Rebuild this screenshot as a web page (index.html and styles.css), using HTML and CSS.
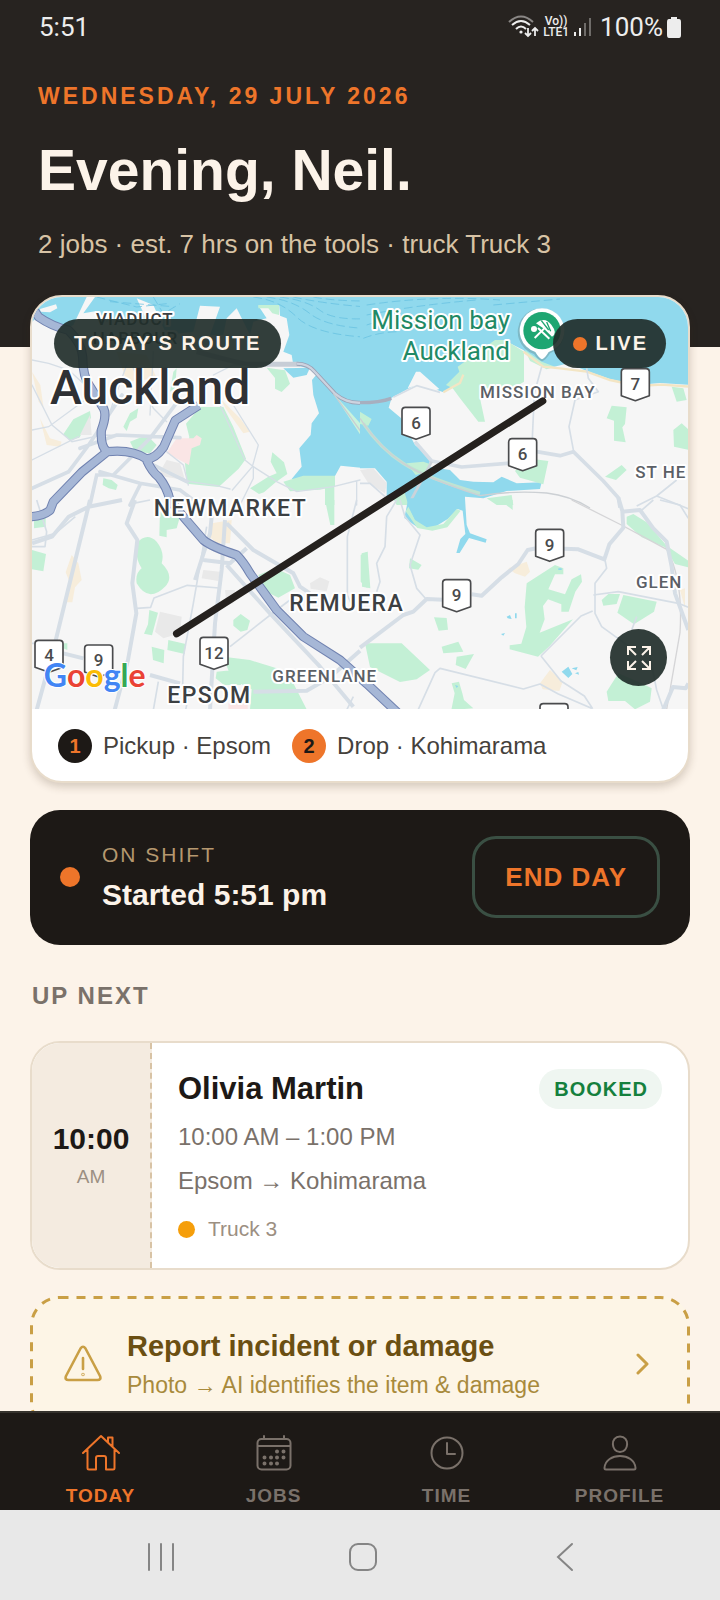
FILE: index.html
```html
<!DOCTYPE html>
<html lang="en">
<head>
    <meta charset="UTF-8">
    <meta name="viewport" content="width=device-width, initial-scale=1.0">
    <title>Today</title>
    <link rel="stylesheet" href="styles.css">
</head>
<body>
<div class="app">

    <div class="status-bar">
        <span class="clock">5:51</span>
        <div class="status-icons">
            <svg width="31" height="24" viewBox="0 0 31 24" fill="none" stroke="#ededed" stroke-width="2">
                <path d="M1 7Q13 -4 25 7" stroke="#8a8785"/>
                <path d="M4 10Q13 2 22 10M8 14Q13 9 18 14"/>
                <circle cx="13" cy="17" r="1.6" fill="#ededed" stroke="none"/>
                <path d="M20 13v8M17 18l3 3 3-3M27 21v-8M24 16l3-3 3 3" stroke-width="1.8"/>
            </svg>
            <span class="volte"><span>Vo))</span><span>LTE1</span></span>
            <svg width="19" height="20" viewBox="0 0 19 20">
                <path d="M1 15h2v4H1zM6 11h2v8H6z" fill="#ededed"/>
                <path d="M11 6h2v13h-2zM16 1h2v18h-2z" fill="#6f6c69"/>
            </svg>
            <span class="charge">100%</span>
            <svg width="14" height="21" viewBox="0 0 14 21" fill="#ededed">
                <path d="M4 0h6v2h2q2 0 2 3v13q0 3-2 3H2q-2 0-2-3V5q0-3 2-3h2z"/>
            </svg>
        </div>
    </div>

    <div class="scroll">
        <header class="hero">
            <p class="date">WEDNESDAY, 29 JULY 2026</p>
            <h1>Evening, Neil.</h1>
            <p class="summary">2 jobs · est. 7 hrs on the tools · truck Truck 3</p>
        </header>

        <main>
            <section class="route-card">
                <div class="map">
                    <svg class="map-art" viewBox="0 0 1968 1236" preserveAspectRatio="xMidYMid slice">
                        <defs>
                            <path id="shield" d="M-42 -38q0 -10 10 -10h64q10 0 10 10v71L0 48L-42 33z" fill="#fff" stroke="#4a4b4d" stroke-width="5" stroke-linejoin="round"/>
                            <path id="motorway" d="M0 30L20 60Q60 88 110 100 150 140 152 180 152 240 175 270L215 335Q225 355 208 400 205 450 226 464L150 525 64 614 54 640Q30 659 -10 659M226 464Q300 456 344 486 370 485 395 450L430 370 500 325M344 490Q360 525 380 540 405 570 414 610L454 659 514 729Q540 750 614 774 635 795 654 829L734 939 814 1019 924 1089 1004 1160 1100 1250"/>
                        </defs>
                        <rect width="1968" height="1236" fill="#f6f6f6"/>

                        <!-- north west -->
                        <g transform="translate(-36 -36)">
                            <path fill="#90d9ed" d="M36 30H1022V548L962 542 940 582 815 582 845 545 838 490 872 450 875 415 897 385 880 330 876 285 895 262 860 248 820 240 815 210 790 200 808 150 800 100 780 92 778 62 715 62 740 100 700 110 690 150 650 70 620 100 610 150 570 150 600 65 540 62 520 140 440 150 400 60 350 40 380 105 260 110 230 78 190 85 225 36 200 36 160 120 120 140 80 125 60 90 36 110z"/>
                            <path fill="#90d9ed" d="M790 250l30 28 40-8 10-22z"/>
                            <path fill="#f6f6f6" d="M60 72l48-14 4 12-22 12-28-2z"/>
                            <g fill="#c3f0d5">
                                <path d="M715 60h62v30l-20-5-12-15-30 0zM740 248l55 8 15 40-25 25-20-10 0-32zM540 366h70l30 60 38 95-22 30-60 55-95-10-8-80 15-60-10-40zM130 448l30-45 50-25 3 20-35 60-30 8zM310 425l20-40 25-15-5 28-20 12-10 28zM330 470l50-20 30 30-20 25-45-5zM250 580l25 5 18 15-5 15-22-5-18-10zM690 610l55-35 25-10-18-35 5-28 35 30 10 35-35 25-35 30-15 5zM790 590l60-18h95v32l-45 10-90 5zM915 600h28v60h-28zM460 260l10-10-5 60-15 10z"/>
                            </g>
                            <path fill="#fae5e5" d="M440 505l30-45 50 0 10-10 15 10-5 20-25 10-8 50z"/>
                            <path fill="#e9e9e9" d="M180 450l30-60 5 60zM420 560l20-35 40 10 15 50-60-10z"/>
                            <path fill="#f7eddb" d="M36 260l20 90 15 20-10-70zM60 400l30 60 35 10-5 15-40-5zM600 340l60 60 30 40-20 5-50-70zM290 200l90 10 30 70-90 10z"/>
                            <g fill="none" stroke="#d6dee6" stroke-linecap="round" stroke-width="4">
                                <path d="M36 225l50 10 60 20 55 50M36 300l60 120 60 50 90-20 190 5 70-80M36 435l50-10 150-110M36 525l140-70M320 240l-40 110-10 30M400 200l-10 190M340 250l60 120 40 40M600 360l75 165 25 20M640 360l75 120-18 65-60 70M660 660l40-80 0-35M420 550l90 40 80 12 40 10M440 500l50 40 15 60M700 545l70 45 60 30 110-15 80-20M1010 590v70M580 270l60-30h60"/>
                            </g>
                            <g fill="none" stroke="#d6dee6" stroke-linecap="round" stroke-width="11">
                                <path d="M180 490l110-40 190 8M480 340l-90 120-110 110-50 0-20 90M36 610l110-50 60-80 100-150M240 560l120 35 120 20 60 45M360 600l-30 60M500 590l-120-60"/>
                            </g>
                            <path d="M530 200q90 25 150 38h160" fill="none" stroke="#c7cdd6" stroke-width="15"/>
                            <path d="M830 236q35 0 55 25l60 65q35 30 80 27" fill="none" stroke="#9aa2b6" stroke-width="12"/>
                            <path d="M830 236q35 0 55 25l60 65q35 30 80 27" fill="none" stroke="#cdd3df" stroke-width="7"/>
                            <path d="M940 325l85 95-5 28z" fill="#c9f3dc"/>
                            <path d="M940 325l85 118" fill="none" stroke="#c9cdd2" stroke-width="4"/>
                            <g fill="none" stroke="#64bfe0" stroke-width="3" stroke-dasharray="26 12" opacity=".7">
                                <path d="M700 36q80 10 130 60t200 60M740 36q80 10 130 50t180 45M780 36q80 10 120 40t140 25M820 36q90 20 220 30M880 36q60 12 160 12M230 36l120 30 90-10M400 36l30 50 50-30M270 50l190 15"/>
                            </g>
                        </g>

                        <!-- north east -->
                        <g transform="translate(984 -36)">
                            <path fill="#90d9ed" d="M0 30H990V300L900 294 830 300 750 282 680 258 625 235 580 246 540 234 490 195 430 165 405 165 405 180 375 205 300 245 314 268 300 292 250 322 205 305 165 300 95 338 86 368 122 398 165 480 212 520 205 545 270 555 300 585 340 590 400 592 425 575 470 595 545 592 540 612 440 618 370 640 315 635V665H150L120 650 80 640V590L45 550H0z"/>
                            <path fill="#f6f6f6" d="M143 310l25-50 12 0 58 52-18 6-60-14z"/>
                            <g fill="#c3f0d5">
                                <path d="M405 165l30 0 57 35 0 90-50 30-60-10-22 30 15 70-20 0-55-70-22-30-20-10 40-40-5-15zM495 195l50 35 40 15-25 8-50-25zM740 400l15-38 45 5-5 50-8 10 10 45-35-5 0-60zM735 575l50-35 15 15-32 30zM935 305l35 5 10 35-30 5zM940 435l25-20 22 20v60l-45-10zM500 520l65 8-15 70-70-20-15-20zM140 535l50-5 22 8-5 20-40 12zM0 380l35 22-10 20-25-5zM380 640l75-10 5 30h-50zM100 640l30-30 15 50h-35z"/>
                            </g>
                            <path fill="none" stroke="#f3e5c4" stroke-width="7" d="M250 322l50-28 10-25M490 200l60 45 50 5 80 10 70 25 85 18 70-4 85 6"/>
                            <path fill="#e9e9e9" d="M0 555l40-5 40 45-5 30-50-30z"/>
                            <g fill="none" stroke="#d6dee6" stroke-width="5" stroke-linejoin="round">
                                <path d="M545 245l-22 80-8 180M680 250l5 30 30 40-70 25-18 80 15 80M0 595l30 0 45 40M950 585l-60 48-60 30M890 633l100 40M240 322l-70-20-70 35"/>
                            </g>
                            <g fill="none" stroke="#d6dee6" stroke-width="11" stroke-linejoin="round">
                                <path d="M165 470l50 58 90 18 150-12M530 500l70 12 40-12 90 88 45 50 5 30"/>
                            </g>
                            <path d="M0 353q60 0 94-13" fill="none" stroke="#a7afbf" stroke-width="10"/>
                            <path d="M10 415q50 75 120 120t230 90" fill="none" stroke="#bfe3d3" stroke-width="10"/>
                            <path d="M0 400q60 90 130 135t230 97q100-16 200-8 70 8 130 45" fill="none" stroke="#ccd0d4" stroke-width="4"/>
                            <path d="M215 530l-70 130" fill="none" stroke="#ccd3da" stroke-width="8"/>
                            <g fill="none" stroke="#64bfe0" stroke-width="3" stroke-dasharray="26 12" opacity=".7">
                                <path d="M20 60q200-30 400-15M20 90q150-30 330-45M20 120q60-20 140-25M10 160q50-20 110-20M400 60l200-18"/>
                            </g>
                        </g>

                        <!-- south west -->
                        <g transform="translate(-36 609)">
                            <g fill="#c3f0d5">
                                <path d="M350 130q30-35 60-5 25 30 15 65 40 40 10 70-50 50-85-10-5-30 15-45-20-30-15-75zM36 150l42 12-8 52-34-6zM42 60l35-10v30l-35 5zM420 30l60 20-10 35-30 5 0 22-22-5zM915 0h28v75h-12zM715 225l50-20 45 20 15 40-50 28-40-20zM640 360l22-18 28 20-8 28-20 5-22-18zM388 330l26 8-18 68-24-5 12-28zM395 440l38 10-2 40-32-10zM445 420l52 12-3 30-52-12zM610 470l80 10 80 25 50 45 40 78H690l5-60-60-30zM590 515l50-5 32 25-10 20-50 0-25-20zM1022 165l20-10v110l-20-20zM130 430l12 0v20l-12-5z"/>
                            </g>
                            <path fill="#e9e9e9" d="M420 335l65 15-5 50-50 15-25-20zM550 210l50 5-5 28-50-8zM870 250l30-18 28 12-8 30-48-8zM615 270l30 0-5 40-20 5z"/>
                            <path fill="#f7eddb" d="M155 165l20 25 10 50-20 22-8 45-18 0 10-60-12-30zM575 70l60-10-5 70-40 0-20-20z"/>
                            <path fill="#fae5e5" d="M625 610h58v20h-58z"/>
                            <g fill="none" stroke="#d6dee6" stroke-width="5" stroke-linejoin="round">
                                <path d="M350 325l42-3 10-28 100-38 95 8M560 80l-40 230-30 160-2 90 20 15-12 60M50 0l30 95-5 45-39 0M630 440l140-110 40-30M1010 0l-28 110v175l20 45M415 545l-15 85M36 120l70-20 60-50M340 10l50-10M980 630l20-40M36 430l60 0"/>
                            </g>
                            <g fill="none" stroke="#d6dee6" stroke-width="12" stroke-linejoin="round">
                                <path d="M210 0l-105 430-55 200M36 130l60-20 50-60 60-30 100-20M345 0l-25 70 32 50-15 130 12 90-25 140-40 150M580 0l-10 100-45 140M615 60l-10 150-20 160-15 260M620 70l80 80 120 70 20 40 30 20M550 180l80 10 50-45M620 195l130 145 150 160 100 120M130 460l60 15M390 525l90 25M700 575l160-3 70-40 90-80"/>
                            </g>
                        </g>

                        <!-- south east -->
                        <g transform="translate(984 609)">
                            <path fill="#90d9ed" d="M145 -5h170l5 80 10 25 50 18-3 10-50-14-28 45h-10l12-42 15-15-8-70-15-5-30 30-40 25-25 5-30-8-35-25z"/>
                            <g fill="#c3f0d5">
                                <path d="M5 160l18-5 8 110-25-5zM150 175l35 20-10 14-28-4zM500 250l85-55 25 10 0 18-25 0-20 45 50 15 20-45 28-15 3 22-20 30-20 60-22 0 0-22-40-15-15 20 5 40-15 40 100-40-70 80-35 32-85-22v-12l35-5 15-50-5-60zM222 352l38 2 4 35-28 3zM245 440l50-15 15 30-60 5zM290 470l52-8-25 45-30-12zM15 430h110l85 80-40 28-50 8-90-45zM275 550l22-5 10 35 5 20 28 25-66 5 10-50zM725 300l20-18 35 0-10 30-40 5zM790 285l100 20-8 30-60 38-50-35zM740 575l35-55 70 30 30 15-5 40-45 23-30-25-50 0zM800 50l20-8 40 25 60 70 65 45v20l-40-10-30-50-70-30-45-40zM420 0h38v30z"/>
                                <path d="M145 20l20 40 35 22 50-10 40-45 12 5-40 50-45 10-45-8-35-50z"/>
                            </g>
                            <path fill="#f7eddb" d="M445 205l55-20 10 30-15 15-30-10zM540 550l30-40 38 35-10 28-50-5zM960 270l15-5v60z"/>
                            <path fill="#90d9ed" d="M605 515l20-15 12 22-12 12zM635 505l18-4-4 10zM645 520l10-4 2 8zM440 350l10-5 5 12-12-2zM465 340h5v15h-5zM423 402l12-3-5 8zM595 205h10v5h-10zM285 555l10 3-5 6z"/>
                            <path d="M635 0l155 78 130 70q50 90 40 250l-40 230" fill="none" stroke="#d5d5d7" stroke-width="4"/>
                            <g fill="none" stroke="#d6dee6" stroke-width="5" stroke-linejoin="round">
                                <path d="M110 0l-30 50-5 90-25 50 10 55-10 30M120 0l15 50 45 55-30 90 20 70 28 32M175 628l50-110 15-13 250 62 50-15 55 30 100 43M543 468l60 75 70 45 25 38M543 468l120-120 35-15M735 180l5 25-35 45v90l20 40 90 65M700 285l75-10 180 35 30 12M830 350l-15 40M880 0l-40 35M900 0l60 15 25 40M870 470l20 100 20 58"/>
                            </g>
                            <g fill="none" stroke="#d6dee6" stroke-width="12" stroke-linejoin="round">
                                <path d="M0 443l130-98 30-10 40-38 50 2M335 283l30 4 60-55 50-40 28-42 30-6M610 146l45 2 78 30 15-45 42-50-3-50-12-40M785 35l55-5 40 55 40 40 15 75 10 80 40 110M985 550l-8 15-38-4-30 70"/>
                            </g>
                        </g>

                        <g fill="none" stroke-linejoin="round">
                            <use href="#motorway" stroke="#7082b0" stroke-width="28"/>
                            <use href="#motorway" stroke="#a6b7d6" stroke-width="22"/>
                        </g>

                        <g class="shields">
                            <use href="#shield" x="1152" y="379"/><text x="1152" y="396">6</text>
                            <use href="#shield" x="1472" y="473"/><text x="1472" y="490">6</text>
                            <use href="#shield" x="1810" y="263"/><text x="1810" y="280">7</text>
                            <use href="#shield" x="1553" y="745"/><text x="1553" y="762">9</text>
                            <use href="#shield" x="1274" y="896"/><text x="1274" y="913">9</text>
                            <use href="#shield" x="546" y="1069"/><text x="546" y="1086">12</text>
                            <use href="#shield" x="51" y="1078"/><text x="51" y="1092">4</text>
                            <use href="#shield" x="200" y="1092"/><text x="200" y="1107">9</text>
                            <use href="#shield" x="1566" y="1268"/>
                        </g>

                        <g class="places">
                            <text class="small dark" x="192" y="84">VIADUCT</text>
                            <text class="small dark" x="182" y="142">HARBOUR</text>
                            <text class="city" x="54" y="321">Auckland</text>
                            <text class="suburb" x="365" y="656">NEWMARKET</text>
                            <text class="suburb" x="772" y="942">REMUERA</text>
                            <text class="suburb" x="406" y="1217">EPSOM</text>
                            <text class="small" x="721" y="1154">GREENLANE</text>
                            <text class="small" x="1344" y="302">MISSION BAY</text>
                            <text class="small" x="1810" y="544">ST HE</text>
                            <text class="small" x="1812" y="874">GLEN</text>
                            <text class="beach" x="1434" y="97">Mission bay</text>
                            <text class="beach" x="1434" y="189">Auckland</text>
                        </g>

                        <!-- beach pin -->
                        <g transform="translate(1530 101)">
                            <path d="M0 92q-12-4-24-22A70 70 0 1 1 24 68Q12 88 0 92z" fill="#6c9aa0" opacity=".5"/>
                            <path d="M0 86q-8-2-20-22A67 67 0 1 1 20 64Q8 84 0 86z" fill="#fff"/>
                            <circle r="56" fill="#1ea672"/>
                            <circle cx="-24" cy="-5" r="9" fill="#fff"/>
                            <path d="M-18 -22Q8 -44 28 -18T30 18L6 -6z" fill="#fff"/>
                            <path d="M-22 22L10 -10M-12 -8L22 24" stroke="#fff" stroke-width="6"/>
                            <path d="M-2 -30L20 -2M14 -26L26 2" stroke="#1ea672" stroke-width="4"/>
                        </g>

                        <path d="M434 1010L1532 312" stroke="#25211e" stroke-width="22" stroke-linecap="round"/>

                        <text class="google" x="35" y="1169"><tspan fill="#4285f4">G</tspan><tspan fill="#ea4335">o</tspan><tspan fill="#fbbc05">o</tspan><tspan fill="#4285f4">g</tspan><tspan fill="#34a853">l</tspan><tspan fill="#ea4335">e</tspan></text>
                    </svg>
                    <div class="map-top">
                        <span class="pill">TODAY'S ROUTE</span>
                        <span class="pill live"><i class="dot"></i>LIVE</span>
                    </div>
                    <button class="expand" type="button" aria-label="Expand map">
                        <svg width="24" height="24" viewBox="0 0 24 24" fill="none" stroke="#fcf3e9" stroke-width="2">
                            <path d="M1 9V1h8M1 1l8 8M15 1h8v8M23 1l-8 8M1 15v8h8M1 23l8-8M23 15v8h-8M23 23l-8-8"/>
                        </svg>
                    </button>
                </div>
                <div class="legend">
                    <span class="stop">1</span><span>Pickup · Epsom</span>
                    <span class="stop drop">2</span><span>Drop · Kohimarama</span>
                </div>
            </section>

            <section class="shift">
                <i class="dot"></i>
                <div class="shift-text">
                    <p class="shift-label">ON SHIFT</p>
                    <p class="shift-start">Started 5:51 pm</p>
                </div>
                <button class="end-day" type="button">END DAY</button>
            </section>

            <h2>UP NEXT</h2>

            <article class="job">
                <div class="job-time">
                    <strong>10:00</strong>
                    <span>AM</span>
                </div>
                <div class="job-body">
                    <div class="job-head">
                        <h3>Olivia Martin</h3>
                        <span class="badge">BOOKED</span>
                    </div>
                    <p>10:00 AM – 1:00 PM</p>
                    <p>Epsom → Kohimarama</p>
                    <div class="truck"><i class="dot"></i>Truck 3</div>
                </div>
            </article>

            <a class="report" href="#report">
                <svg class="dashes"><rect x="1.5" y="1.5" rx="28"/></svg>
                <svg width="38" height="38" viewBox="0 0 38 38" fill="none" stroke="#c99f45" stroke-width="2.6" stroke-linecap="round" stroke-linejoin="round">
                    <path d="M16.500 3.500q2.500-3.500 5 0L36 31q1.500 4-2.500 4H4.500Q.5 35 2 31zM19 13v11"/>
                    <circle cx="19" cy="29.500" r=".4"/>
                </svg>
                <div class="report-text">
                    <strong>Report incident or damage</strong>
                    <span>Photo → AI identifies the item &amp; damage</span>
                </div>
                <svg width="14" height="24" viewBox="0 0 14 24" fill="none" stroke="#c99f45" stroke-width="3" stroke-linecap="round" stroke-linejoin="round">
                    <path d="M2 3l9 9-9 9"/>
                </svg>
            </a>
        </main>
    </div>

    <nav class="tabs">
        <a class="active" href="#today">
            <svg viewBox="0 0 38 38">
                <path d="M1 19L19 2l18 17M5.500 16v18q0 1.500 1.500 1.500h7V24q0-2 2-2h6q2 0 2 2v11.500h7q1.500 0 1.500-1.500V16M26 8V3.500h4.500v9"/>
            </svg>
            TODAY
        </a>
        <a href="#jobs">
            <svg viewBox="0 0 38 38">
                <rect x="2.500" y="5" width="33" height="30.500" rx="4"/>
                <path d="M3 12h32M9 2v3M29 2v3"/>
                <path class="days" d="M22 17.500h.01M28.500 17.500h.01M9.500 23.500h.01M16 23.500h.01M22 23.500h.01M28.500 23.500h.01M9.500 29.500h.01M16 29.500h.01M22 29.500h.01"/>
            </svg>
            JOBS
        </a>
        <a href="#time">
            <svg viewBox="0 0 38 38">
                <circle cx="19" cy="19" r="15.500"/>
                <path d="M19 9v11h8"/>
            </svg>
            TIME
        </a>
        <a href="#profile">
            <svg viewBox="0 0 38 38">
                <path d="M19 2.500c10 0 9 15.500 0 15.500S9 2.500 19 2.500zM3.500 34c1-16 30-16 31 0q0 1.500-1.500 1.500H5q-1.500 0-1.500-1.500z"/>
            </svg>
            PROFILE
        </a>
    </nav>

    <div class="system-bar">
        <button type="button" aria-label="Recent apps">
            <svg width="30" height="30" viewBox="0 0 30 30"><path d="M3 2v26M15 2v26M27 2v26"/></svg>
        </button>
        <button type="button" aria-label="Home">
            <svg width="30" height="30" viewBox="0 0 30 30"><rect x="2" y="2" width="26" height="26" rx="8"/></svg>
        </button>
        <button type="button" aria-label="Back">
            <svg width="30" height="30" viewBox="0 0 30 30"><path d="M22 2L8 15l14 13"/></svg>
        </button>
    </div>

</div>
</body>
</html>
```

FILE: styles.css
```css
* {
    box-sizing: border-box;
}

body {
    margin: 0;
    background: #fcf3e9;
    color: #1d1916;
    font-family: "Liberation Sans", Arial, sans-serif;
}

h1, h2, h3, p {
    margin: 0;
}

button {
    font-family: inherit;
    cursor: pointer;
}

a {
    text-decoration: none;
}

.app {
    display: flex;
    flex-direction: column;
    height: 100vh;
}

.dot {
    flex: none;
    display: block;
    width: 20px;
    height: 20px;
    border-radius: 50%;
    background: #ee752a;
}

/* status bar */
.status-bar {
    flex: none;
    display: flex;
    align-items: center;
    justify-content: space-between;
    height: 54px;
    padding: 0 39px;
    background: #272320;
    color: #ededed;
    font-family: Roboto, sans-serif;
    font-size: 26px;
}

.status-icons {
    display: flex;
    align-items: center;
    gap: 4px;
}

.volte {
    display: flex;
    flex-direction: column;
    align-items: center;
    font-size: 12px;
    line-height: 11px;
    font-weight: 500;
}

.charge {
    margin-left: 4px;
}

/* page */
.scroll {
    flex: 1;
    min-height: 0;
    overflow-y: auto;
    scrollbar-width: none;
}

.hero {
    padding: 28px 38px 87px;
    background: #272320;
}

.date {
    color: #ee752a;
    font-size: 23px;
    line-height: 28px;
    font-weight: 700;
    letter-spacing: 3px;
}

h1 {
    margin: 28px 0 26px;
    color: #fcf3e9;
    font-size: 57px;
    line-height: 64px;
}

.summary {
    color: #d8c3a5;
    font-size: 26px;
    line-height: 32px;
}

main {
    padding: 0 30px 26px;
}

/* route card */
.route-card {
    position: relative;
    margin-top: -52px;
    border: 2px solid #e8dccb;
    border-radius: 32px;
    background: #fff;
    box-shadow: 0 4px 8px rgba(60, 40, 20, .2);
    overflow: hidden;
}

.map {
    position: relative;
    height: 412px;
}

.map-art {
    display: block;
    width: 100%;
    height: 100%;
    font-family: Roboto, sans-serif;
    font-weight: 500;
}

.shields text {
    font-size: 51px;
    text-anchor: middle;
    fill: #4a4b4d;
}

.places text {
    paint-order: stroke;
    stroke: #fff;
    stroke-width: 12px;
    stroke-linejoin: round;
    fill: #3c4043;
}

.places .city {
    font-size: 144px;
    fill: #2f3135;
}

.places .suburb {
    font-size: 69px;
    letter-spacing: 4px;
}

.places .small {
    font-size: 51px;
    letter-spacing: 3px;
    fill: #5b6066;
}

.places .dark {
    fill: #3c4043;
}

.places .beach {
    font-size: 78px;
    font-weight: 400;
    text-anchor: end;
    fill: #1f8a66;
}

.google {
    font-family: Lato, sans-serif;
    font-size: 96px;
    font-weight: 700;
    paint-order: stroke;
    stroke: #fff;
    stroke-width: 6px;
}

.map-top {
    position: absolute;
    inset: 22px 22px auto;
    display: flex;
    justify-content: space-between;
}

.pill {
    display: flex;
    align-items: center;
    gap: 9px;
    height: 49px;
    padding: 0 20px;
    border-radius: 25px;
    background: rgba(33, 46, 42, .92);
    color: #fcf3e9;
    font-size: 20px;
    font-weight: 700;
    letter-spacing: 2px;
}

.live {
    padding: 0 18px 0 20px;
}

.pill .dot {
    width: 14px;
    height: 14px;
}

.expand {
    position: absolute;
    right: 21px;
    bottom: 23px;
    display: flex;
    align-items: center;
    justify-content: center;
    width: 57px;
    height: 57px;
    padding: 0;
    border: none;
    border-radius: 50%;
    background: rgba(33, 46, 42, .92);
}

.legend {
    display: flex;
    align-items: center;
    gap: 11px;
    padding: 20px 26px 18px;
    color: #45413c;
    font-size: 24px;
}

.stop {
    width: 34px;
    height: 34px;
    border-radius: 50%;
    background: #1d1916;
    color: #ee752a;
    font-size: 20px;
    line-height: 34px;
    font-weight: 700;
    text-align: center;
}

.drop {
    margin-left: 10px;
    background: #ee752a;
    color: #1d1916;
}

/* shift */
.shift {
    display: flex;
    align-items: center;
    gap: 22px;
    margin-top: 27px;
    padding: 26px 30px 27px;
    border-radius: 30px;
    background: #1d1916;
}

.shift-text {
    flex: 1;
}

.shift-label {
    color: #b5986f;
    font-size: 21px;
    line-height: 28px;
    letter-spacing: 2px;
}

.shift-start {
    margin-top: 8px;
    color: #fcf3e9;
    font-size: 30px;
    line-height: 36px;
    font-weight: 700;
}

.end-day {
    height: 82px;
    padding: 0 30px;
    border: 3px solid #3a4f43;
    border-radius: 24px;
    background: none;
    color: #ee752a;
    font-size: 26px;
    font-weight: 700;
    letter-spacing: 1px;
}

h2 {
    margin: 37px 2px 31px;
    color: #7a716a;
    font-size: 24px;
    line-height: 28px;
    letter-spacing: 2px;
}

/* job card */
.job {
    display: flex;
    border: 2px solid #e8dccb;
    border-radius: 30px;
    background: #fff;
    overflow: hidden;
}

.job-time {
    flex: none;
    display: flex;
    flex-direction: column;
    align-items: center;
    justify-content: center;
    gap: 10px;
    width: 120px;
    border-right: 2px dashed #d8c3a5;
    background: #f4ebe0;
}

.job-time strong {
    font-size: 30px;
    line-height: 32px;
}

.job-time span {
    color: #9c8f82;
    font-size: 19px;
    line-height: 24px;
}

.job-body {
    flex: 1;
    padding: 26px 26px 25px;
    color: #7a716a;
    font-size: 24px;
    line-height: 32px;
}

.job-head {
    display: flex;
    align-items: center;
    justify-content: space-between;
}

.job-body p {
    margin-top: 12px;
}

h3 {
    color: #1d1916;
    font-size: 31px;
    line-height: 40px;
}

.badge {
    padding: 0 14px 0 15px;
    border-radius: 20px;
    background: #eff6f1;
    color: #15803d;
    font-size: 20px;
    line-height: 40px;
    font-weight: 700;
    letter-spacing: 1px;
}

.truck {
    display: flex;
    align-items: center;
    gap: 13px;
    margin-top: 18px;
    color: #9c8f82;
    font-size: 21px;
    line-height: 28px;
}

.truck .dot {
    width: 17px;
    height: 17px;
    background: #f59e0b;
}

/* report incident */
.report {
    position: relative;
    display: flex;
    align-items: center;
    gap: 25px;
    margin-top: 26px;
    padding: 32px 40px 32px 34px;
    border-radius: 30px;
    background: #fdf5e6;
}

.dashes {
    position: absolute;
    inset: 0;
    width: 100%;
    height: 100%;
}

.dashes rect {
    width: calc(100% - 3px);
    height: calc(100% - 3px);
    fill: none;
    stroke: #c99f45;
    stroke-width: 3px;
    stroke-dasharray: 9 8;
}

.report-text {
    flex: 1;
    display: flex;
    flex-direction: column;
    gap: 6px;
}

.report-text strong {
    color: #6b4f12;
    font-size: 29px;
    line-height: 36px;
}

.report-text span {
    color: #a88a3c;
    font-size: 23px;
    line-height: 30px;
}

/* bottom tabs */
.tabs {
    flex: none;
    display: grid;
    grid-template-columns: repeat(4, 1fr);
    padding: 21px 14px 2px;
    border-top: 2px solid #35322d;
    background: #1d1916;
}

.tabs a {
    display: flex;
    flex-direction: column;
    align-items: center;
    gap: 12px;
    color: #7a716a;
    font-size: 19px;
    line-height: 24px;
    font-weight: 700;
    letter-spacing: 1px;
}

.tabs .active {
    color: #ee752a;
}

.tabs svg {
    width: 38px;
    height: 38px;
    fill: none;
    stroke: currentColor;
    stroke-width: 2;
    stroke-linecap: round;
    stroke-linejoin: round;
}

.tabs .days {
    stroke-width: 4;
}

.system-bar {
    flex: none;
    display: flex;
    align-items: center;
    justify-content: center;
    gap: 112px;
    height: 90px;
    padding: 4px 0 0 6px;
    background: #e8e8e8;
}

.system-bar button {
    display: flex;
    justify-content: center;
    width: 90px;
    padding: 0;
    border: none;
    background: none;
}

.system-bar svg {
    fill: none;
    stroke: #858585;
    stroke-width: 2;
    stroke-linecap: round;
}
```
